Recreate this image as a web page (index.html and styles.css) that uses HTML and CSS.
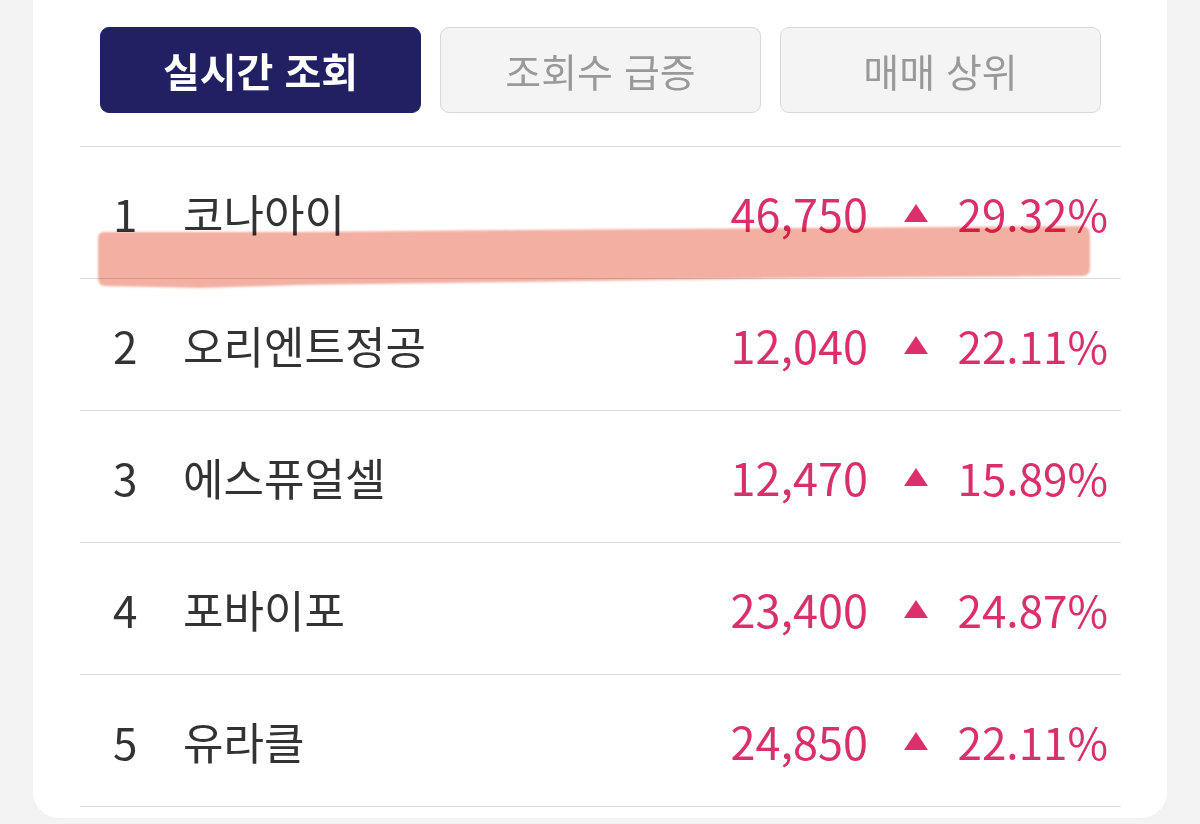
FILE: index.html
```html
<!DOCTYPE html>
<html lang="ko">
<head>
<meta charset="utf-8">
<link rel="stylesheet" href="styles.css">
</head>
<body>
<div class="page">
  <div class="card">
    <div class="tabs">
      <div class="tab active">실시간 조회</div>
      <div class="tab">조회수 급증</div>
      <div class="tab">매매 상위</div>
    </div>
    <ul class="list">
      <li class="row"><span class="rank">1</span><span class="name">코나아이</span><span class="price">46,750</span><span class="tri"></span><span class="pct">29.32%</span></li>
      <li class="row"><span class="rank">2</span><span class="name">오리엔트정공</span><span class="price">12,040</span><span class="tri"></span><span class="pct">22.11%</span></li>
      <li class="row"><span class="rank">3</span><span class="name">에스퓨얼셀</span><span class="price">12,470</span><span class="tri"></span><span class="pct">15.89%</span></li>
      <li class="row"><span class="rank">4</span><span class="name">포바이포</span><span class="price">23,400</span><span class="tri"></span><span class="pct">24.87%</span></li>
      <li class="row"><span class="rank">5</span><span class="name">유라클</span><span class="price">24,850</span><span class="tri"></span><span class="pct">22.11%</span></li>
    </ul>
  </div>
  <svg class="marker" width="1200" height="824" viewBox="0 0 1200 824" aria-hidden="true">
    <defs>
      <filter id="soft" x="-5%" y="-50%" width="110%" height="200%">
        <feGaussianBlur stdDeviation="1"/>
      </filter>
    </defs>
    <path filter="url(#soft)" fill="#f09888" fill-opacity="0.78" d="M98,240 C98,233 100,232 106,232 L300,232 L520,230 L800,228 L1082,226 C1088,226 1090,229 1090,238 L1090,266 C1090,274 1088,276 1080,276 L800,278 L520,282 L300,285 L200,288 L106,286 C100,286 98,283 98,276 Z"/>
  </svg>
</div>
</body>
</html>
```

FILE: styles.css
```css
* { box-sizing: border-box; }
html, body {
  margin: 0;
  padding: 0;
  background: #f3f3f3;
}
body {
  font-family: "Noto Sans CJK KR", "Noto Sans", sans-serif;
  color: #333;
}
.page {
  position: relative;
  width: 1200px;
  height: 824px;
  overflow: hidden;
}
.card {
  margin: 0 33px;
  height: 818px;
  background: #fff;
  border-radius: 0 0 26px 26px;
  padding-top: 27px;
}
.tabs {
  display: flex;
  gap: 19px;
  padding: 0 66px 0 67px;
  height: 86px;
}
.tab {
  flex: 1;
  display: flex;
  align-items: center;
  justify-content: center;
  border-radius: 9px;
  background: #f4f4f4;
  border: 1px solid #d8d8d8;
  color: #999;
  font-size: 39px;
  font-weight: 400;
}
.tab.active {
  background: #212063;
  border-color: #212063;
  color: #fff;
  font-weight: 700;
  font-size: 40px;
}
.list {
  list-style: none;
  margin: 33px 46px 0 47px;
  padding: 0;
  border-top: 1px solid #dcdcdc;
}
.row {
  display: flex;
  align-items: center;
  height: 132px;
  border-bottom: 1px solid #dcdcdc;
  padding: 0 13px 0 33px;
  font-size: 44px;
  font-weight: 400;
}
.rank {
  width: 70px;
  color: #333;
}
.name {
  flex: 1;
  color: #333;
}
.price {
  color: #d9306b;
  font-size: 45px;
}
.tri {
  width: 0;
  height: 0;
  margin: 0 20px 0 36px;
  border-left: 12px solid transparent;
  border-right: 12px solid transparent;
  border-bottom: 18px solid #dc2f6c;
}
.pct {
  width: 160px;
  text-align: right;
  color: #d9306b;
  font-size: 44px;
}
.marker {
  position: absolute;
  left: 0;
  top: 0;
  pointer-events: none;
  mix-blend-mode: multiply;
}
```
